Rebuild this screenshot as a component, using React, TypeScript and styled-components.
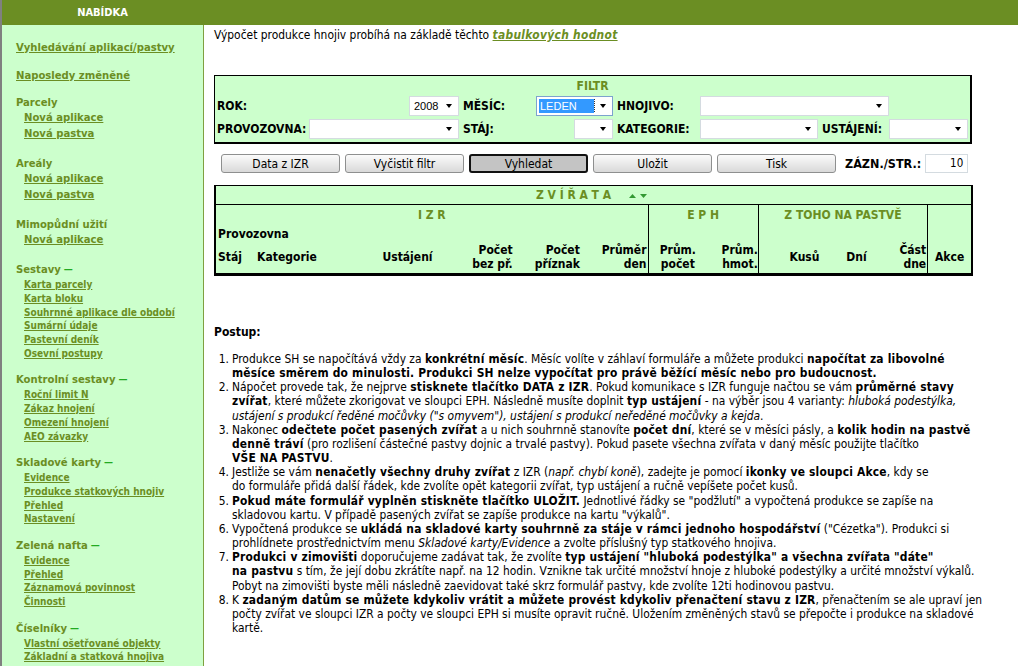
import React from 'react';
import styled, { createGlobalStyle } from 'styled-components';

const FONT = `"DejaVu Sans Condensed", "DejaVu Sans", sans-serif`;
const OLIVE = '#6b8e23';
const MINT = '#ccffcc';

const GlobalStyle = createGlobalStyle`
  html, body {
    margin: 0;
    padding: 0;
    background: #fff;
  }
  body {
    font-family: ${FONT};
    font-size: 11.9px;
    color: #000;
  }
  b {
    letter-spacing: 0.2px;
  }
`;

type MenuSection = {
  title?: string;
  link?: string;
  toggle?: boolean;
  small?: boolean;
  items?: string[];
};

const menu: MenuSection[] = [
  { link: 'Vyhledávání aplikací/pastvy' },
  { link: 'Naposledy změněné' },
  { title: 'Parcely', items: ['Nová aplikace', 'Nová pastva'] },
  { title: 'Areály', items: ['Nová aplikace', 'Nová pastva'] },
  { title: 'Mimopůdní užití', items: ['Nová aplikace'] },
  {
    title: 'Sestavy',
    toggle: true,
    small: true,
    items: [
      'Karta parcely',
      'Karta bloku',
      'Souhrnné aplikace dle období',
      'Sumární údaje',
      'Pastevní deník',
      'Osevní postupy',
    ],
  },
  {
    title: 'Kontrolní sestavy',
    toggle: true,
    small: true,
    items: ['Roční limit N', 'Zákaz hnojení', 'Omezení hnojení', 'AEO závazky'],
  },
  {
    title: 'Skladové karty',
    toggle: true,
    small: true,
    items: ['Evidence', 'Produkce statkových hnojiv', 'Přehled', 'Nastavení'],
  },
  {
    title: 'Zelená nafta',
    toggle: true,
    small: true,
    items: ['Evidence', 'Přehled', 'Záznamová povinnost', 'Činnosti'],
  },
  {
    title: 'Číselníky',
    toggle: true,
    small: true,
    items: ['Vlastní ošetřované objekty', 'Základní a statková hnojiva'],
  },
];

const Sidebar = () => (
  <Side>
    {menu.map((s, i) =>
      s.link ? (
        <TopLink key={i} href="#">
          {s.link}
        </TopLink>
      ) : (
        <Section key={i} $small={s.small}>
          <SectionTitle>
            {s.title}
            {s.toggle && <Toggle>—</Toggle>}
          </SectionTitle>
          {s.items?.map((it, j) => (
            <SubLink key={j} href="#" $small={s.small}>
              {it}
            </SubLink>
          ))}
        </Section>
      ),
    )}
  </Side>
);

const FakeSelect = ({
  width,
  value,
  focused,
}: {
  width: number;
  value?: string;
  focused?: boolean;
}) => (
  <SelectBox style={{ width }} $focused={focused}>
    <SelectValue>
      {focused ? <Highlight>{value}</Highlight> : value}
    </SelectValue>
    <Caret />
  </SelectBox>
);

const Filter = () => (
  <FilterBox>
    <FilterTitle>FILTR</FilterTitle>
    <FilterGrid>
      <PairCell>
        <Label>ROK:</Label>
        <FakeSelect width={50} value="2008" />
      </PairCell>
      <PairCell>
        <Label>MĚSÍC:</Label>
        <FakeSelect width={77} value="LEDEN" focused />
      </PairCell>
      <Label>HNOJIVO:</Label>
      <SpanCell $span={2}>
        <FakeSelect width={192} />
      </SpanCell>
      <div />

      <PairCell>
        <Label>PROVOZOVNA:</Label>
        <FakeSelect width={150} />
      </PairCell>
      <PairCell>
        <Label>STÁJ:</Label>
        <FakeSelect width={39} />
      </PairCell>
      <Label>KATEGORIE:</Label>
      <SpanCell $span={1}>
        <FakeSelect width={118} />
      </SpanCell>
      <Label>USTÁJENÍ:</Label>
      <SpanCell $span={1}>
        <FakeSelect width={79} />
      </SpanCell>
    </FilterGrid>
  </FilterBox>
);

const buttons = ['Data z IZR', 'Vyčistit filtr', 'Vyhledat', 'Uložit', 'Tisk'];

const Toolbar = () => (
  <ToolbarRow>
    {buttons.map((b) => (
      <Button key={b} $primary={b === 'Vyhledat'}>
        {b}
      </Button>
    ))}
    <PageLabel>ZÁZN./STR.:</PageLabel>
    <PageInput>10</PageInput>
  </ToolbarRow>
);

const SortArrows = () => (
  <svg width="22" height="6" viewBox="0 0 22 6" style={{ marginLeft: 18 }}>
    <polygon points="0,5 3.5,1 7,5" fill="#339933" />
    <polygon points="11,1 18,1 14.5,5" fill="#339933" />
  </svg>
);

const AnimalTable = () => (
  <Table>
    <colgroup>
      {[38, 87, 94, 80, 67, 66, 59, 51, 73, 50, 46, 44].map((w, i) => (
        <col key={i} style={{ width: w }} />
      ))}
    </colgroup>
    <thead>
      <tr>
        <TitleCell colSpan={12}>
          Z V Í Ř A T A
          <SortArrows />
        </TitleCell>
      </tr>
      <tr>
        <GroupCell colSpan={6}>I Z R</GroupCell>
        <GroupCell colSpan={2} $divider>
          E P H
        </GroupCell>
        <GroupCell colSpan={3} $divider>
          Z TOHO NA PASTVĚ
        </GroupCell>
        <GroupCell $divider />
      </tr>
      <tr>
        <PlainCell colSpan={6}>Provozovna</PlainCell>
        <PlainCell colSpan={2} $divider />
        <PlainCell colSpan={3} $divider />
        <PlainCell $divider />
      </tr>
      <tr>
        <ColCell $align="left" $pad="2px">Stáj</ColCell>
        <ColCell $align="left" $pad="4px">Kategorie</ColCell>
        <ColCell $align="right" $pad="2px">Ustájení</ColCell>
        <ColCell $align="right" $pad="2px">
          Počet
          <br />
          bez př.
        </ColCell>
        <ColCell $align="right" $pad="2px">
          Počet
          <br />
          příznak
        </ColCell>
        <ColCell $align="right" $pad="1px">
          Průměr
          <br />
          den
        </ColCell>
        <ColCell $align="center" $divider>
          Prům.
          <br />
          počet
        </ColCell>
        <ColCell $align="right" $pad="0px">
          Prům.
          <br />
          hmot.
        </ColCell>
        <ColCell $align="right" $pad="12px" $divider>
          Kusů
        </ColCell>
        <ColCell $align="center">Dní</ColCell>
        <ColCell $align="right" $pad="1px">
          Část
          <br />
          dne
        </ColCell>
        <ColCell $align="center" $divider>
          Akce
        </ColCell>
      </tr>
    </thead>
  </Table>
);

const Steps = () => (
  <StepList>
    <Step>
      <Num>1.</Num>
      <StepText>
        Produkce SH se napočítává vždy za <b>konkrétní měsíc</b>. Měsíc volíte v záhlaví formuláře a můžete produkci{' '}
        <b>napočítat za libovolné</b>
        <br />
        <b>měsíce směrem do minulosti. Produkci SH nelze vypočítat pro právě běžící měsíc nebo pro budoucnost.</b>
      </StepText>
    </Step>
    <Step>
      <Num>2.</Num>
      <StepText>
        Nápočet provede tak, že nejprve <b>stisknete tlačítko DATA z IZR</b>. Pokud komunikace s IZR funguje načtou se vám{' '}
        <b>průměrné stavy</b>
        <br />
        <b>zvířat</b>, které můžete zkorigovat ve sloupci EPH. Následně musíte doplnit <b>typ ustájení</b> - na výběr jsou 4
        varianty: <i>hluboká podestýlka,</i>
        <br />
        <i>ustájení s produkcí ředěné močůvky ("s omyvem"), ustájení s produkcí neředěné močůvky a kejda</i>.
      </StepText>
    </Step>
    <Step>
      <Num>3.</Num>
      <StepText>
        Nakonec <b>odečtete počet pasených zvířat</b> a u nich souhrnně stanovíte <b>počet dní</b>, které se v měsíci
        pásly, a <b>kolik hodin na pastvě</b>
        <br />
        <b>denně tráví</b> (pro rozlišení částečné pastvy dojnic a trvalé pastvy). Pokud pasete všechna zvířata v daný
        měsíc použijte tlačítko
        <br />
        <b>VŠE NA PASTVU</b>.
      </StepText>
    </Step>
    <Step>
      <Num>4.</Num>
      <StepText>
        Jestliže se vám <b>nenačetly všechny druhy zvířat</b> z IZR (<i>např. chybí koně</i>), zadejte je pomocí{' '}
        <b>ikonky ve sloupci Akce</b>, kdy se
        <br />
        do formuláře přidá další řádek, kde zvolíte opět kategorii zvířat, typ ustájení a ručně vepíšete počet kusů.
      </StepText>
    </Step>
    <Step>
      <Num>5.</Num>
      <StepText>
        <b>Pokud máte formulář vyplněn stiskněte tlačítko ULOŽIT.</b> Jednotlivé řádky se "podžlutí" a vypočtená
        produkce se zapíše na
        <br />
        skladovou kartu. V případě pasených zvířat se zapíše produkce na kartu "výkalů".
      </StepText>
    </Step>
    <Step>
      <Num>6.</Num>
      <StepText>
        Vypočtená produkce se <b>ukládá na skladové karty souhrnně za stáje v rámci jednoho hospodářství</b>{' '}
        ("Cézetka"). Produkci si
        <br />
        prohlídnete prostřednictvím menu <i>Skladové karty/Evidence</i> a zvolte příslušný typ statkového hnojiva.
      </StepText>
    </Step>
    <Step>
      <Num>7.</Num>
      <StepText>
        <b>Produkci v zimovišti</b> doporučujeme zadávat tak, že zvolíte{' '}
        <b>typ ustájení "hluboká podestýlka" a všechna zvířata "dáte"</b>
        <br />
        <b>na pastvu</b> s tím, že její dobu zkrátíte např. na 12 hodin. Vznikne tak určité množství hnoje z hluboké
        podestýlky a určité množství výkalů.
        <br />
        Pobyt na zimovišti byste měli následně zaevidovat také skrz formulář pastvy, kde zvolíte 12ti hodinovou pastvu.
      </StepText>
    </Step>
    <Step>
      <Num>8.</Num>
      <StepText>
        K <b>zadaným datům se můžete kdykoliv vrátit a můžete provést kdykoliv přenačtení stavu z IZR</b>, přenačtením
        se ale upraví jen
        <br />
        počty zvířat ve sloupci IZR a počty ve sloupci EPH si musíte opravit ručně. Uložením změněných stavů se
        přepočte i produkce na skladové
        <br />
        kartě.
      </StepText>
    </Step>
  </StepList>
);

export default function App() {
  return (
    <>
      <GlobalStyle />
      <Page>
        <TopBar>
          <TopTitle>NABÍDKA</TopTitle>
        </TopBar>
        <Body>
          <Sidebar />
          <Main>
            <Intro>
              Výpočet produkce hnojiv probíhá na základě těchto <IntroLink href="#">tabulkových hodnot</IntroLink>
            </Intro>
            <Filter />
            <Toolbar />
            <AnimalTable />
            <StepsTitle>Postup:</StepsTitle>
            <Steps />
          </Main>
        </Body>
      </Page>
    </>
  );
}

const Page = styled.div`
  display: flex;
  flex-direction: column;
  min-height: 100vh;
  border-left: 2px solid #808080;
  box-sizing: border-box;
`;

const TopBar = styled.div`
  display: flex;
  height: 25px;
  background: ${OLIVE};
`;

const TopTitle = styled.div`
  width: 201px;
  line-height: 25px;
  text-align: center;
  color: #fff;
  font-weight: bold;
  font-size: 11px;
`;

const Body = styled.div`
  display: flex;
  flex: 1;
`;

const Side = styled.nav`
  display: flex;
  flex-direction: column;
  align-items: flex-start;
  width: 187px;
  padding: 16px 0 0 14px;
  background: ${MINT};
  border-right: 1px solid #7f9f3f;
`;

const TopLink = styled.a`
  display: block;
  margin-bottom: 13.5px;
  color: ${OLIVE};
  font-weight: bold;
  font-size: 11.2px;
  line-height: 14px;
  text-decoration: underline;
`;

const Section = styled.div<{ $small?: boolean }>`
  display: flex;
  flex-direction: column;
  align-items: flex-start;
  margin-bottom: ${(p) => (p.$small ? '12.8px' : '15px')};
`;

const SectionTitle = styled.div`
  color: ${OLIVE};
  font-weight: bold;
  font-size: 11.2px;
  line-height: 14px;
`;

const Toggle = styled.span`
  margin-left: 3px;
  color: #22aa22;
  font-size: 10px;
`;

const SubLink = styled.a<{ $small?: boolean }>`
  display: block;
  padding-left: 8px;
  color: ${OLIVE};
  font-weight: bold;
  font-size: ${(p) => (p.$small ? '10px' : '11.2px')};
  line-height: ${(p) => (p.$small ? '13.75px' : '16px')};
  text-decoration: underline;
  &:first-of-type {
    margin-top: ${(p) => (p.$small ? '1px' : '0')};
  }
`;

const Main = styled.main`
  width: 758px;
  padding: 3px 0 20px 10px;
`;

const Intro = styled.div`
  line-height: 14px;
`;

const IntroLink = styled.a`
  color: ${OLIVE};
  font-weight: bold;
  font-style: italic;
  letter-spacing: 0.3px;
  text-decoration: underline;
`;

const FilterBox = styled.div`
  margin-top: 33px;
  padding: 2px;
  background: ${MINT};
  border: 1px solid #000;
  border-width: 1px 2px 2px 1px;
`;

const FilterTitle = styled.div`
  color: ${OLIVE};
  font-weight: bold;
  font-size: 12px;
  line-height: 16px;
  text-align: center;
`;

const FilterGrid = styled.div`
  display: grid;
  grid-template-columns: 246px 154px 83px 122px 67px 1fr;
  grid-auto-rows: 23px;
  align-items: center;
`;

const PairCell = styled.div`
  display: flex;
  align-items: center;
  justify-content: space-between;
  padding-right: 4px;
`;

const SpanCell = styled.div<{ $span: number }>`
  grid-column: span ${(p) => p.$span};
  display: flex;
`;

const Label = styled.span`
  font-weight: bold;
  font-size: 12px;
  white-space: nowrap;
`;

const SelectBox = styled.div<{ $focused?: boolean }>`
  display: flex;
  align-items: center;
  height: 20px;
  box-sizing: border-box;
  padding: 0 6px 0 2px;
  background: #fff;
  border: 1px solid ${(p) => (p.$focused ? '#7da2ce' : '#d4dbe0')};
  font-family: 'Liberation Sans', Arial, sans-serif;
  font-size: 11px;
`;

const SelectValue = styled.span`
  flex: 1;
  padding-left: 2px;
  overflow: hidden;
  white-space: nowrap;
`;

const Highlight = styled.span`
  display: inline-block;
  width: 54px;
  margin-left: -2px;
  padding-left: 1px;
  line-height: 14px;
  color: #fff;
  background: #3399ff;
  outline: 1px dotted #333;
`;

const Caret = styled.span`
  width: 0;
  height: 0;
  border-left: 3.5px solid transparent;
  border-right: 3.5px solid transparent;
  border-top: 4px solid #000;
`;

const ToolbarRow = styled.div`
  display: flex;
  align-items: center;
  gap: 5px;
  margin-top: 10px;
  padding-left: 7px;
`;

const Button = styled.button<{ $primary?: boolean }>`
  width: 119px;
  height: 19px;
  padding: 0;
  font-family: ${FONT};
  font-size: 12px;
  color: #000;
  border-radius: 3px;
  border: ${(p) => (p.$primary ? '2px solid #111' : '1px solid #8e8f8f')};
  background: ${(p) =>
    p.$primary ? '#c4c4c4' : 'linear-gradient(#fbfbfb, #eaeaea 50%, #d9d9d9)'};
`;

const PageLabel = styled.span`
  margin-left: 4px;
  font-weight: bold;
  font-size: 12.5px;
`;

const PageInput = styled.div`
  width: 43px;
  height: 19px;
  box-sizing: border-box;
  margin-left: -1px;
  padding-right: 4px;
  border: 1px solid #d4dbe0;
  text-align: right;
  line-height: 17px;
  font-size: 11.5px;
`;

const Table = styled.table`
  width: 759px;
  margin-top: 12px;
  table-layout: fixed;
  border-collapse: collapse;
  background: ${MINT};
  border-style: solid;
  border-color: #000;
  border-width: 1px 2px 3px 2px;
  font-size: 12px;
`;

const TitleCell = styled.th`
  height: 18px;
  padding: 0;
  color: ${OLIVE};
  font-weight: bold;
  text-align: center;
  border-bottom: 1px solid #000;
  white-space: nowrap;
`;

const GroupCell = styled.th<{ $divider?: boolean }>`
  height: 20px;
  padding: 0;
  color: ${OLIVE};
  font-weight: bold;
  text-align: center;
  border-left: ${(p) => (p.$divider ? '1px solid #000' : 'none')};
`;

const PlainCell = styled.th<{ $divider?: boolean }>`
  height: 17px;
  padding: 0 2px;
  font-weight: bold;
  text-align: left;
  border-left: ${(p) => (p.$divider ? '1px solid #000' : 'none')};
`;

const ColCell = styled.th<{ $align: string; $pad?: string; $divider?: boolean }>`
  height: 30px;
  padding: 0 ${(p) => (p.$align === 'right' ? p.$pad || '2px' : '0')} 1px
    ${(p) => (p.$align === 'left' ? p.$pad || '2px' : '0')};
  font-weight: bold;
  line-height: 14px;
  vertical-align: middle;
  text-align: ${(p) => p.$align};
  white-space: nowrap;
  border-left: ${(p) => (p.$divider ? '1px solid #000' : 'none')};
`;

const StepsTitle = styled.div`
  margin-top: 49px;
  font-weight: bold;
  font-size: 12px;
  line-height: 14px;
`;

const StepList = styled.ol`
  margin: 13px 0 0;
  padding: 0;
  list-style: none;
`;

const Step = styled.li`
  display: flex;
  line-height: 14.15px;
  white-space: nowrap;
`;

const Num = styled.span`
  width: 15px;
  flex: none;
  margin-right: 3px;
  text-align: right;
`;

const StepText = styled.span`
  flex: 1;
`;
